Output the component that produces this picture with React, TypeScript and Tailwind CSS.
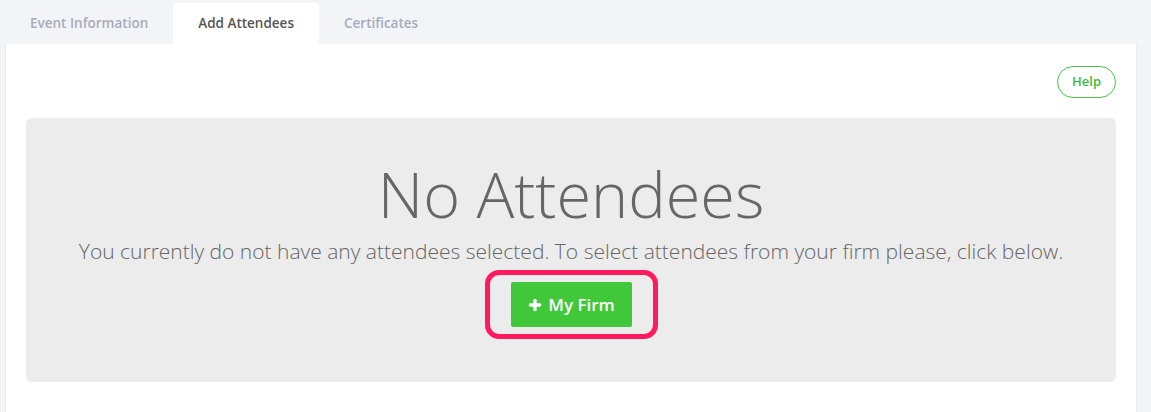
import { Plus } from "lucide-react";

const tabs = ["Event Information", "Add Attendees", "Certificates"];

export default function App() {
  return (
    <div
      className="min-h-[412px] bg-[#f3f4f8] pl-[5px] pr-[14px] pt-[3px]"
      style={{ fontFamily: '"Open Sans", sans-serif' }}
    >
      <div className="flex">
        {tabs.map((tab) => (
          <div
            key={tab}
            className={
              tab === "Add Attendees"
                ? "h-[41px] px-[25px] flex items-center rounded-t-[4px] bg-white text-[13.5px] font-semibold text-[#555]"
                : "h-[41px] px-[25px] flex items-center text-[13.5px] font-semibold text-[#a6acbb]"
            }
          >
            {tab}
          </div>
        ))}
      </div>
      <div className="bg-white border-l border-r border-[#e8eaf0] min-h-[368px] px-[20px] pt-[22px]">
        <div className="flex justify-end">
          <button className="h-[32px] px-[14px] rounded-full border border-[#4cc24c] text-[#3cb93c] text-[13px] font-semibold">
            Help
          </button>
        </div>
        <div className="mt-[20px] h-[264px] rounded-[6px] bg-[#ececec] flex flex-col items-center pt-[40px]">
          <h1 className="text-[63px] font-light leading-[72px] text-[#666]">
            No Attendees
          </h1>
          <p className="mt-[7px] text-[21px] font-light leading-[28px] text-[#666]">
            You currently do not have any attendees selected. To select attendees from your firm please, click below.
          </p>
          <div className="mt-[5px] rounded-[14px] border-[5px] border-[#ff1a5e] px-[21px] py-[7px]">
            <button className="h-[45px] w-[121px] rounded-[2px] bg-[#40c83a] text-white text-[17px] font-semibold flex items-center justify-center gap-[5px]">
              <Plus className="w-[16px] h-[16px]" strokeWidth={5} />
              My Firm
            </button>
          </div>
        </div>
      </div>
    </div>
  );
}
